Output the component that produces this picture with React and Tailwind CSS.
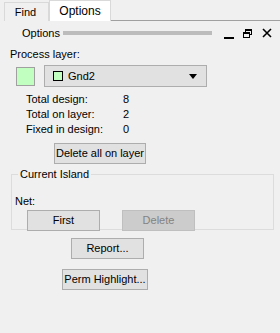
import React from 'react';

const Btn = ({ children, className = '', disabled }) => (
  <div
    className={`h-[21px] flex items-center justify-center border ${disabled ? 'border-[#bfbfbf] bg-[#cccccc] text-[#838383]' : 'border-[#adadad] bg-[#e1e1e1] text-black'} ${className}`}
  >
    {children}
  </div>
);

const Stat = ({ label, value }) => (
  <div className="flex h-[15px] items-center">
    <div className="w-[97px]">{label}</div>
    <div>{value}</div>
  </div>
);

export default function App() {
  return (
    <div
      className="w-[280px] h-[333px] bg-[#f0f0f0] text-[11px] text-black overflow-hidden"
      style={{ fontFamily: '"Liberation Sans", Arial, sans-serif' }}
    >
      {/* tabs */}
      <div className="flex items-end h-[21px]">
        <div className="w-[4px] h-full" />
        <div className="w-[45px] h-[19px] border border-b-0 border-[#d9d9d9] bg-[#f0f0f0] flex items-center justify-center pr-[2px]">
          Find
        </div>
        <div className="w-[62px] h-[21px] border border-b-0 border-[#d9d9d9] bg-white flex items-center justify-center text-[12px]">
          Options
        </div>
        <div className="flex-1 border-b border-[#a0a0a0]" />
      </div>

      {/* panel header */}
      <div className="flex items-center h-[14px] mt-[5px] pl-[22px] pr-[8px]">
        <span>Options</span>
        <div className="flex-1 h-[4px] bg-[#bcbcbc] ml-[3px] mr-[12px]" />
        <svg width="11" height="11" viewBox="0 0 11 11" className="mr-[8px]">
          <rect x="0" y="9" width="10" height="2" fill="#000" />
        </svg>
        <svg width="9" height="9" viewBox="0 0 9 9" className="mr-[10px]">
          <rect x="2.5" y="0.5" width="6" height="5" fill="none" stroke="#000" />
          <rect x="2" y="0" width="7" height="2" fill="#000" />
          <rect x="0.5" y="3.5" width="6" height="5" fill="#f0f0f0" stroke="#000" />
          <rect x="0" y="3" width="7" height="2" fill="#000" />
        </svg>
        <svg width="10" height="10" viewBox="0 0 10 10">
          <path d="M1 1L9 9M9 1L1 9" stroke="#000" strokeWidth="1.6" />
        </svg>
      </div>

      <div className="pl-[10px] mt-[8px] h-[13px] flex items-center">Process layer:</div>

      <div className="flex items-center mt-[4px]">
        <div className="ml-[16px] w-[19px] h-[19px] border border-[#a0a0a0] bg-[#c0ffc0]" />
        <div className="ml-[9px] w-[163px] h-[22px] border border-[#adadad] bg-[#e1e1e1] flex items-center pl-[8px] pr-[9px]">
          <div className="w-[10px] h-[10px] border border-black bg-[#c0ffc0]" />
          <span className="ml-[5px]">Gnd2</span>
          <div className="flex-1" />
          <svg width="8" height="5" viewBox="0 0 8 5">
            <path d="M0 0H8L4 5Z" fill="#000" />
          </svg>
        </div>
      </div>

      <div className="pl-[26px] mt-[5px]">
        <Stat label="Total design:" value="8" />
        <Stat label="Total on layer:" value="2" />
        <Stat label="Fixed in design:" value="0" />
      </div>

      <Btn className="ml-[54px] w-[92px] mt-[6px]">Delete all on layer</Btn>

      {/* group box */}
      <div className="relative ml-[11px] mr-[6px] mt-[10px] h-[56px] border border-[#dcdcdc]">
        <div className="absolute left-[6px] top-[-8px] px-[2px] bg-[#f0f0f0] leading-[14px]">Current Island</div>
        <div className="pl-[3px] pt-[20px] leading-[13px]">Net:</div>
        <div className="flex mt-[2px]">
          <Btn className="ml-[15px] w-[73px]">First</Btn>
          <Btn className="ml-[22px] w-[73px]" disabled>Delete</Btn>
        </div>
      </div>

      <Btn className="ml-[71px] w-[73px] mt-[8px]">Report...</Btn>
      <Btn className="ml-[62px] w-[86px] mt-[10px]">Perm Highlight...</Btn>
    </div>
  );
}
